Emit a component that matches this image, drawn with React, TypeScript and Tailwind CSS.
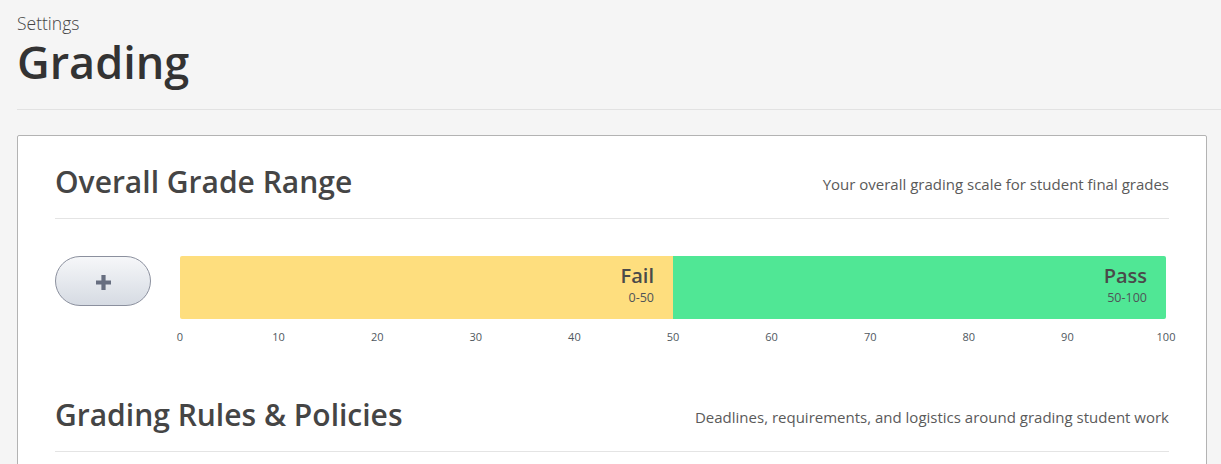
import React from 'react';

const font = { fontFamily: '"Open Sans", "Noto Sans", Arial, sans-serif' };

interface GradeBand {
  label: string;
  min: number;
  max: number;
  color: string;
}

const bands: GradeBand[] = [
  { label: 'Fail', min: 0, max: 50, color: 'bg-[#fede7e]' },
  { label: 'Pass', min: 50, max: 100, color: 'bg-[#50e795]' },
];

const ticks = [0, 10, 20, 30, 40, 50, 60, 70, 80, 90, 100];

const SectionHeader: React.FC<{ title: string; subtitle: string }> = ({ title, subtitle }) => (
  <div className="flex items-end justify-between border-b border-[#e4e4e4] pb-4">
    <h2 className="text-[30px] leading-[40px] font-semibold text-[#454545]">{title}</h2>
    <p className="mb-[8px] text-[15px] leading-5 text-[#5a5a5a]">{subtitle}</p>
  </div>
);

const GradeBar: React.FC = () => (
  <div className="mr-[3px] flex-1">
    <div className="flex h-[63px] overflow-hidden rounded-[2px]">
      {bands.map((band) => (
        <div
          key={band.label}
          className={`${band.color} flex flex-col items-end pt-2 pr-[19px]`}
          // szerokość pasma liczona z danych
          style={{ width: `${band.max - band.min}%` }}
        >
          <span className="text-[20px] leading-6 font-semibold text-[#4a4a4a]">{band.label}</span>
          <span className="mt-[2px] text-[12.5px] leading-4 text-[#4f5358]">
            {band.min}-{band.max}
          </span>
        </div>
      ))}
    </div>
    <div className="relative mt-[11px] h-[14px]">
      {ticks.map((t) => (
        <span
          key={t}
          className="absolute top-0 -translate-x-1/2 text-[11px] leading-[14px] text-[#505860]"
          style={{ left: `${t}%` }}
        >
          {t}
        </span>
      ))}
    </div>
  </div>
);

const App: React.FC = () => {
  return (
    <div className="min-h-[464px] bg-[#f5f5f5] pb-10" style={font}>
      <div className="ml-[17px] border-b border-[#e2e2e2] pt-[13px] pb-[19px]">
        <p className="text-[17.5px] leading-5 font-light text-[#444444]">Settings</p>
        <h1 className="mt-[1px] text-[45px] leading-[56px] font-semibold text-[#333333]">Grading</h1>
      </div>

      <div className="mt-[25px] mr-[14px] ml-[17px] rounded-[2px] border border-[#b3b3b3] bg-white px-[37px] pt-[26px] pb-10">
        <SectionHeader
          title="Overall Grade Range"
          subtitle="Your overall grading scale for student final grades"
        />

        <div className="mt-[37px] flex items-start gap-[29px]">
          <button className="flex h-[50px] w-[96px] shrink-0 items-center justify-center rounded-full border border-[#8b909e] bg-gradient-to-b from-[#f6f7f9] to-[#d6dbe3]">
            <svg width="17" height="17" viewBox="0 0 17 17" className="mt-[3px]">
              <path d="M8.5 1v15M1 8.5h15" stroke="#676e80" strokeWidth="4.2" />
            </svg>
          </button>
          <GradeBar />
        </div>

        <div className="mt-[51px]">
          <SectionHeader
            title="Grading Rules & Policies"
            subtitle="Deadlines, requirements, and logistics around grading student work"
          />
        </div>
      </div>
    </div>
  );
};

export default App;
